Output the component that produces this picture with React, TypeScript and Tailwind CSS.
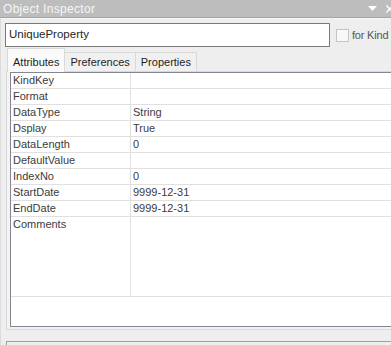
const rows: { name: string; value: string }[] = [
  { name: 'KindKey', value: '' },
  { name: 'Format', value: '' },
  { name: 'DataType', value: 'String' },
  { name: 'Dsplay', value: 'True' },
  { name: 'DataLength', value: '0' },
  { name: 'DefaultValue', value: '' },
  { name: 'IndexNo', value: '0' },
  { name: 'StartDate', value: '9999-12-31' },
  { name: 'EndDate', value: '9999-12-31' },
];

function Tab({ label, active }: { label: string; active?: boolean }) {
  if (active) {
    return (
      <div className="relative z-10 -mb-px flex h-[24px] items-start border border-b-0 border-[#d9d9d9] bg-[#fafafa] px-[5px] pt-[5px] text-[11px] text-[#1e1e1e]">
        {label}
      </div>
    );
  }
  return (
    <div className="flex h-[19px] items-center border border-b-0 border-l-0 border-[#d9d9d9] bg-[#f0f0f0] px-[5px] text-[11px] text-[#1e1e1e]">
      {label}
    </div>
  );
}

export default function App() {
  return (
    <div className="h-[345px] w-[391px] overflow-hidden bg-[#eeeeee] text-[11px] text-[#3c3c3c] font-['Liberation_Sans',Arial,sans-serif]">
      {/* title bar */}
      <div className="flex h-[18px] items-center justify-between border-b border-[#a4a4a4] bg-[#bdbdbd] pl-[3px]">
        <span className="text-[12px] leading-none tracking-[0.3px] text-[#f6f6f6]">Object Inspector</span>
        <div className="flex items-center gap-[9px]">
          <svg width="9" height="5" viewBox="0 0 9 5">
            <path d="M0 0 H9 L4.5 5 Z" fill="#ffffff" />
          </svg>
          <svg width="5" height="8" viewBox="0 0 5 8">
            <path d="M0.5 0.5 L5 5.5 M0.5 7.5 L5 2.5" stroke="#ffffff" strokeWidth="1.4" />
          </svg>
        </div>
      </div>

      <div className="h-[327px] border-l border-t border-[#dcdcdc] border-t-[#f6f6f6]">
        {/* name + checkbox */}
        <div className="mt-[4px] flex items-center whitespace-nowrap">
          <div className="ml-[4px] flex h-[24px] w-[325px] shrink-0 items-center border border-[#7a7a7a] bg-white pl-[3px] text-[11.5px] text-[#262626]">
            UniqueProperty
          </div>
          <div className="ml-[6px] h-[13px] w-[13px] shrink-0 border border-[#c4c4c4] bg-[#f8f8f8]" />
          <span className="ml-[3px] shrink-0 text-[11px] tracking-[-0.2px] text-[#555555]">for Kind</span>
        </div>

        {/* tabs */}
        <div className="mt-[1px] flex h-[23px] items-end pl-[6px]">
          <Tab label="Attributes" active />
          <Tab label="Preferences" />
          <Tab label="Properties" />
        </div>

        {/* tab page */}
        <div className="ml-[5px] h-[259px] border-y border-l border-[#d9d9d9] bg-[#f3f3f3] pl-[3px]">
          <div className="flex h-[255px] flex-col border-y border-l border-[#868692] bg-white">
            {rows.map((r) => (
              <div key={r.name} className="flex h-[16px] shrink-0 border-b border-[#e0e0e0]">
                <div className="flex w-[120px] items-center border-r border-[#e0e0e0] pl-[2px]">{r.name}</div>
                <div className="flex items-center pl-[2px]">{r.value}</div>
              </div>
            ))}
            <div className="flex h-[80px] shrink-0 border-b border-[#e0e0e0]">
              <div className="w-[120px] border-r border-[#e0e0e0] pl-[2px] leading-[15px]">Comments</div>
              <div className="pl-[2px]" />
            </div>
          </div>
        </div>

        {/* next panel */}
        <div className="ml-[5px] mt-[11px] h-[20px] border-l border-t border-[#a0a0a0] bg-[#eeeeee]" />
      </div>
    </div>
  );
}
